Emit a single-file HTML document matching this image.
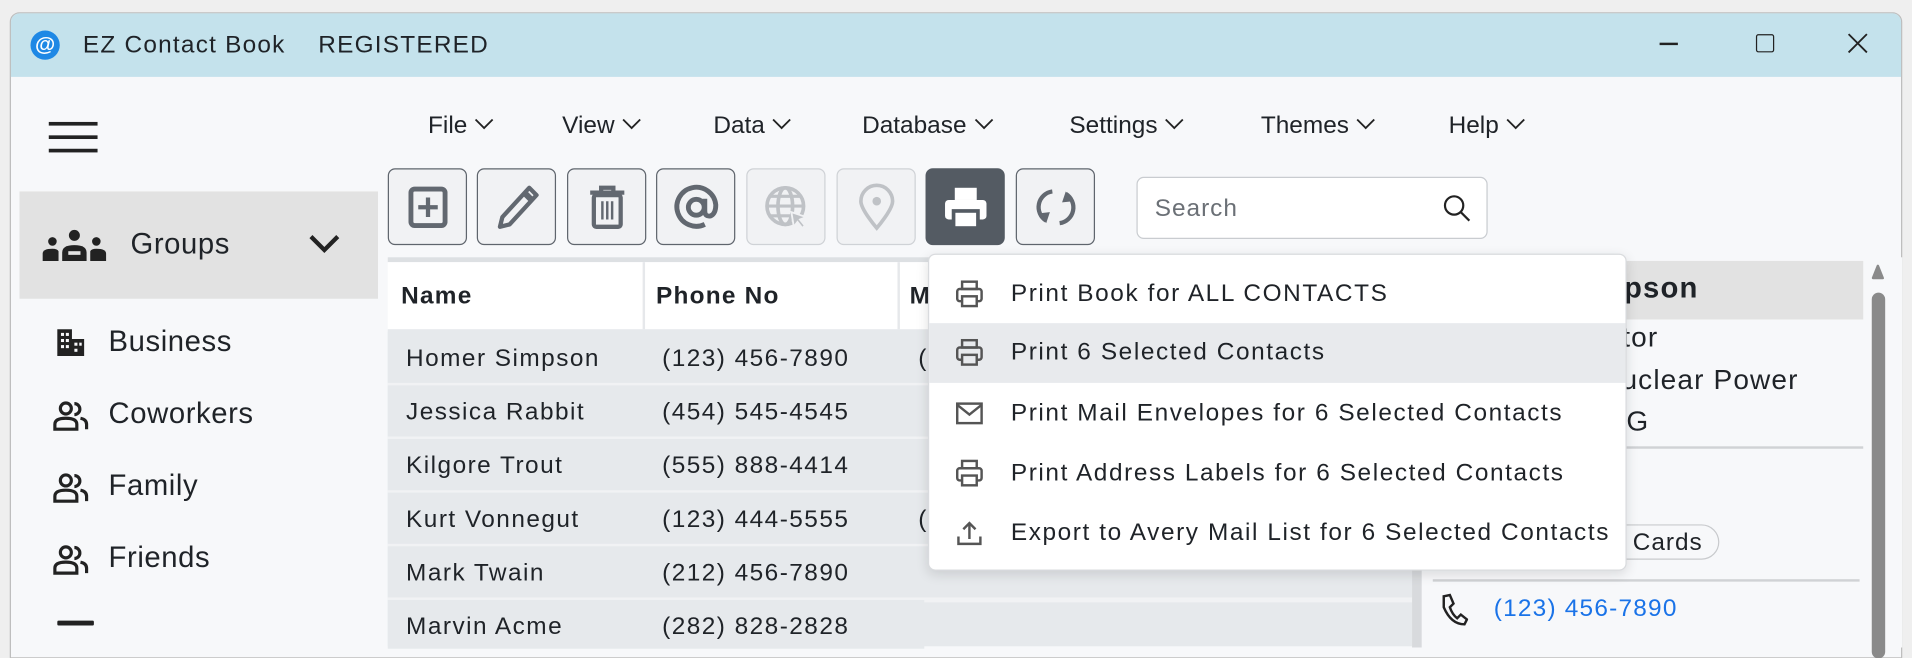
<!DOCTYPE html>
<html><head><meta charset="utf-8"><style>
*{box-sizing:border-box;margin:0;padding:0}
html,body{width:1912px;height:631px;overflow:hidden;background:#efefef;font-family:"Liberation Sans",sans-serif;color:#1f2328}
#s{position:absolute;left:0;top:0;width:1568px;height:518px;transform:scale(1.21939);transform-origin:0 0}
.a{position:absolute}
.win{left:8px;top:10px;width:1552px;height:530px;border:1px solid #bdbdbd;border-radius:8px 8px 0 0;background:#f7f8fa;overflow:hidden}
.tb{left:0;top:0;width:100%;height:52px;background:#c4e2ec}
.t{font-size:20px;white-space:nowrap;letter-spacing:0.05em}
.menu{font-size:20px;top:92px}
.menu svg{margin-left:6px;vertical-align:2px}
.btn{top:138px;width:65px;height:63px;border:1.5px solid #5f656d;border-radius:6px;background:#f1f2f4;display:flex;align-items:center;justify-content:center}
.btn.dis{border-color:#cfd2d6}
.btn.on{background:#545b63;border-color:#545b63}
.grp{font-size:24px;letter-spacing:0.02em}
.row{left:318px;width:440px;height:42px;background:#e6e9ec;font-size:20px;letter-spacing:0.06em}
.row span{position:absolute;top:11px}
.mi{left:0;width:573px;height:49px;font-size:20px;letter-spacing:0.065em}
.mi span{position:absolute;left:67px;top:13px;white-space:nowrap}
.mi svg{position:absolute;left:21px;top:12px}
.rp{font-size:23px;letter-spacing:0.04em;white-space:nowrap}
</style></head><body><div id="s">
<div class="a win"></div>
<div class="a tb" style="left:9px;top:11px;width:1550px;border-radius:7px 7px 0 0"></div>
<div class="a" style="left:25px;top:25px;width:24px;height:24px;border-radius:50%;background:#1e88e5;color:#fff;font-size:17px;font-weight:bold;text-align:center;line-height:23px">@</div>
<div class="a t" style="left:68px;top:26px">EZ Contact Book</div>
<div class="a t" style="left:261px;top:26px">REGISTERED</div>
<div class="a" style="left:1361px;top:35px;width:15px;height:1.5px;background:#222"></div>
<div class="a" style="left:1440px;top:28px;width:15px;height:15px;border:1.5px solid #222;border-radius:2px"></div>
<svg class="a" style="left:1515px;top:27px" width="17" height="17"><path d="M1 1L16 16M16 1L1 16" stroke="#222" stroke-width="1.5"/></svg>
<div class="a" style="left:40px;top:100px;width:40px;height:3px;background:#222;box-shadow:0 11px 0 #222,0 22px 0 #222"></div>
<div class="a menu" style="left:351px">File<svg width="16" height="10"><path d="M1 1L8 8L15 1" stroke="#222" fill="none" stroke-width="1.5"/></svg></div>
<div class="a menu" style="left:461px">View<svg width="16" height="10"><path d="M1 1L8 8L15 1" stroke="#222" fill="none" stroke-width="1.5"/></svg></div>
<div class="a menu" style="left:585px">Data<svg width="16" height="10"><path d="M1 1L8 8L15 1" stroke="#222" fill="none" stroke-width="1.5"/></svg></div>
<div class="a menu" style="left:707px">Database<svg width="16" height="10"><path d="M1 1L8 8L15 1" stroke="#222" fill="none" stroke-width="1.5"/></svg></div>
<div class="a menu" style="left:877px">Settings<svg width="16" height="10"><path d="M1 1L8 8L15 1" stroke="#222" fill="none" stroke-width="1.5"/></svg></div>
<div class="a menu" style="left:1034px">Themes<svg width="16" height="10"><path d="M1 1L8 8L15 1" stroke="#222" fill="none" stroke-width="1.5"/></svg></div>
<div class="a menu" style="left:1188px">Help<svg width="16" height="10"><path d="M1 1L8 8L15 1" stroke="#222" fill="none" stroke-width="1.5"/></svg></div>
<div class="a btn" style="left:318px"><svg width="40" height="40"><rect x="6" y="5" width="28" height="30" rx="3" fill="none" stroke="#626870" stroke-width="4"/><path d="M20 12V28M12 20H28" stroke="#626870" stroke-width="3.5"/></svg></div>
<div class="a btn" style="left:391px"><svg width="40" height="40"><path d="M30 4L36 10L14 34L6 36L8 28Z" fill="none" stroke="#626870" stroke-width="3.5" stroke-linejoin="round"/><path d="M26 8L32 14" stroke="#626870" stroke-width="5"/></svg></div>
<div class="a btn" style="left:465px"><svg width="40" height="40"><path d="M6 8H34M15 8V4H25V8" stroke="#626870" stroke-width="3.5" fill="none"/><rect x="9" y="10" width="22" height="26" rx="2" fill="none" stroke="#626870" stroke-width="3.5"/><path d="M16 15V30M20 15V30M24 15V30" stroke="#626870" stroke-width="2"/></svg></div>
<div class="a btn" style="left:538px"><svg width="42" height="42"><circle cx="21" cy="21" r="6.5" fill="none" stroke="#626870" stroke-width="4"/><path d="M28 14V24Q28 29 33 28Q37 26 37 19A16 16 0 1 0 28 35" fill="none" stroke="#626870" stroke-width="4"/></svg></div>
<div class="a btn dis" style="left:612px"><svg width="40" height="40"><circle cx="19" cy="19" r="15" fill="none" stroke="#bfc2c6" stroke-width="3"/><ellipse cx="19" cy="19" rx="6" ry="15" fill="none" stroke="#bfc2c6" stroke-width="3"/><path d="M4 19H34M7 11H31M7 27H27" stroke="#bfc2c6" stroke-width="2.5"/><path d="M24 24L36 28L31 30L35 35L33 37L29 32L26 36Z" fill="#bfc2c6" stroke="#f1f2f4" stroke-width="1.5"/></svg></div>
<div class="a btn dis" style="left:686px"><svg width="40" height="40"><path d="M20 37C20 37 7 22 7 15A13 13 0 0 1 33 15C33 22 20 37 20 37Z" fill="none" stroke="#bfc2c6" stroke-width="3"/><circle cx="20" cy="15" r="3.5" fill="#bfc2c6"/></svg></div>
<div class="a btn on" style="left:759px"><svg width="40" height="40"><rect x="11" y="4" width="18" height="10" fill="#fff"/><rect x="3" y="14" width="34" height="16" rx="3" fill="#fff"/><rect x="10" y="23" width="20" height="14" fill="#fff" stroke="#545b63" stroke-width="3"/><rect x="13" y="26" width="14" height="8" fill="#fff"/></svg></div>
<div class="a btn" style="left:833px"><svg width="40" height="40"><path d="M17 7A13 13 0 0 0 12 31" fill="none" stroke="#626870" stroke-width="3.5"/><path d="M23 33A13 13 0 0 0 28 9" fill="none" stroke="#626870" stroke-width="3.5"/><path d="M6 25L12 33L15 24Z" fill="#626870"/><path d="M34 15L28 7L25 16Z" fill="#626870"/></svg></div>
<div class="a" style="left:932px;top:145px;width:288px;height:51px;border:1px solid #c9ccd0;border-radius:6px;background:#fff"></div>
<div class="a" style="left:947px;top:160px;font-size:20px;color:#6b7076;letter-spacing:0.04em">Search</div>
<svg class="a" style="left:1183px;top:159px" width="24" height="24"><circle cx="9.5" cy="9.5" r="7.5" fill="none" stroke="#222" stroke-width="1.8"/><path d="M15 15L22 22" stroke="#222" stroke-width="1.8"/></svg>
<div class="a" style="left:16px;top:157px;width:294px;height:88px;background:#e2e2e2"></div>
<svg class="a" style="left:33px;top:186px" width="56" height="30"><circle cx="28" cy="7" r="4.5" fill="#222"/><circle cx="10" cy="12" r="3.5" fill="#222"/><circle cx="46" cy="12" r="3.5" fill="#222"/><path d="M18 28V21Q18 15 28 15Q38 15 38 21V28Z" fill="#222"/><path d="M2 28V22Q2 18 10 18Q14 18 15 20V28Z" fill="#222"/><path d="M54 28V22Q54 18 46 18Q42 18 41 20V28Z" fill="#222"/><rect x="23" y="20" width="10" height="3" fill="#e2e2e2"/></svg>
<div class="a grp" style="left:107px;top:187px">Groups</div>
<svg class="a" style="left:253px;top:191px" width="26" height="18"><path d="M2 3L13 14L24 3" stroke="#222" stroke-width="3.5" fill="none"/></svg>
<svg class="a" style="left:45px;top:268px" width="26" height="26"><path d="M2 2H14V10H24V24H2Z" fill="#222"/><g fill="#f7f8fa"><rect x="5" y="5" width="2.5" height="2.5"/><rect x="9" y="5" width="2.5" height="2.5"/><rect x="5" y="10" width="2.5" height="2.5"/><rect x="9" y="10" width="2.5" height="2.5"/><rect x="5" y="15" width="2.5" height="2.5"/><rect x="9" y="15" width="2.5" height="2.5"/><rect x="16" y="13" width="2.5" height="2.5"/><rect x="16" y="18" width="2.5" height="2.5"/><rect x="20" y="13" width="2" height="2.5"/></g></svg>
<div class="a grp" style="left:89px;top:267px">Business</div>
<svg class="a" style="left:43px;top:328px" width="30" height="26"><circle cx="11" cy="7" r="4.5" fill="none" stroke="#222" stroke-width="2.6"/><path d="M2 24V20Q2 15 11 15Q20 15 20 20V24Z" fill="none" stroke="#222" stroke-width="2.6"/><path d="M18 3A4 4 0 0 1 18 12M23 15Q28 16 28 20V24" fill="none" stroke="#222" stroke-width="2.6"/></svg>
<div class="a grp" style="left:89px;top:326px">Coworkers</div>
<svg class="a" style="left:43px;top:387px" width="30" height="26"><circle cx="11" cy="7" r="4.5" fill="none" stroke="#222" stroke-width="2.6"/><path d="M2 24V20Q2 15 11 15Q20 15 20 20V24Z" fill="none" stroke="#222" stroke-width="2.6"/><path d="M18 3A4 4 0 0 1 18 12M23 15Q28 16 28 20V24" fill="none" stroke="#222" stroke-width="2.6"/></svg>
<div class="a grp" style="left:89px;top:385px">Family</div>
<svg class="a" style="left:43px;top:446px" width="30" height="26"><circle cx="11" cy="7" r="4.5" fill="none" stroke="#222" stroke-width="2.6"/><path d="M2 24V20Q2 15 11 15Q20 15 20 20V24Z" fill="none" stroke="#222" stroke-width="2.6"/><path d="M18 3A4 4 0 0 1 18 12M23 15Q28 16 28 20V24" fill="none" stroke="#222" stroke-width="2.6"/></svg>
<div class="a grp" style="left:89px;top:444px">Friends</div>
<div class="a" style="left:47px;top:509px;width:30px;height:4px;background:#222;border-radius:1px"></div>
<div class="a" style="left:318px;top:211px;width:840px;height:4px;background:#dde0e3"></div>
<div class="a" style="left:318px;top:215px;width:840px;height:55px;background:#fff"></div>
<div class="a" style="left:527px;top:215px;width:2px;height:55px;background:#e6e8eb"></div>
<div class="a" style="left:736px;top:215px;width:2px;height:55px;background:#e6e8eb"></div>
<div class="a" style="left:329px;top:232px;font-size:20px;font-weight:bold;letter-spacing:0.05em">Name</div>
<div class="a" style="left:538px;top:232px;font-size:20px;font-weight:bold;letter-spacing:0.05em">Phone No</div>
<div class="a" style="left:746px;top:232px;font-size:20px;font-weight:bold">M</div>
<div class="a" style="left:318px;top:270px;width:840px;height:260px;background:#e6e9ec"></div>
<div class="a row" style="top:272px"><span style="left:15px">Homer Simpson</span><span style="left:225px">(123) 456-7890</span><span style="left:435px">(</span></div>
<div class="a row" style="top:316px"><span style="left:15px">Jessica Rabbit</span><span style="left:225px">(454) 545-4545</span></div>
<div class="a row" style="top:360px"><span style="left:15px">Kilgore Trout</span><span style="left:225px">(555) 888-4414</span></div>
<div class="a row" style="top:404px"><span style="left:15px">Kurt Vonnegut</span><span style="left:225px">(123) 444-5555</span><span style="left:435px">(</span></div>
<div class="a row" style="top:448px"><span style="left:15px">Mark Twain</span><span style="left:225px">(212) 456-7890</span></div>
<div class="a row" style="top:492px;height:40px"><span style="left:15px">Marvin Acme</span><span style="left:225px">(282) 828-2828</span></div>
<div class="a" style="left:318px;top:314px;width:840px;height:2px;background:#f1f2f4;box-shadow:0 44px 0 #f1f2f4,0 88px 0 #f1f2f4,0 132px 0 #f1f2f4,0 176px 0 #f1f2f4"></div>
<div class="a" style="left:758px;top:492px;width:400px;height:2px;background:#f1f2f4"></div>
<div class="a" style="left:1158px;top:211px;width:8px;height:320px;background:#d8dadd"></div>
<div class="a" style="left:1166px;top:211px;width:394px;height:320px;background:#f7f8fa"></div>
<div class="a" style="left:1166px;top:214px;width:362px;height:48px;background:#e2e2e2"></div>
<div class="a rp" style="right:175px;top:223px;font-size:24px;font-weight:bold">Simpson</div>
<div class="a rp" style="right:208px;top:263px">Inspector</div>
<div class="a rp" style="right:93px;top:298px">Nuclear Power</div>
<div class="a rp" style="left:1320px;top:332px">7G</div>
<div class="a" style="left:1175px;top:366px;width:353px;height:2px;background:#d0d2d5"></div>
<div class="a" style="left:1300px;top:430px;width:110px;height:29px;border:1.5px solid #c8cacd;border-radius:15px;font-size:20px;padding:3px 0 0 38px;letter-spacing:0.04em">Cards</div>
<div class="a" style="left:1175px;top:475px;width:350px;height:2px;background:#d0d2d5"></div>
<svg class="a" style="left:1180px;top:486px" width="24" height="28"><path d="M4 3L9 2L12 9L9 12Q11 18 15 21L18 18L23 22L21 26Q10 26 4 12Z" fill="none" stroke="#222" stroke-width="2"/></svg>
<div class="a" style="left:1225px;top:488px;font-size:20px;color:#1a73e8;letter-spacing:0.05em">(123) 456-7890</div>
<svg class="a" style="left:1532px;top:214px" width="16" height="16"><path d="M4 14L8 4L12 14Z" fill="#8a8a8a" stroke="#8a8a8a" stroke-width="2" stroke-linejoin="round"/></svg>
<div class="a" style="left:1535px;top:240px;width:11px;height:300px;border-radius:6px;background:#8a8a8a"></div>
<div class="a" style="left:761px;top:208px;width:573px;height:260px;background:#fff;border:1px solid #d9dbde;border-radius:6px;box-shadow:0 3px 10px rgba(0,0,0,.12);overflow:hidden">
<div class="a mi" style="top:8px"><svg width="24" height="24"><rect x="6" y="2" width="12" height="6" fill="none" stroke="#555" stroke-width="2"/><rect x="2" y="8" width="20" height="10" rx="2" fill="none" stroke="#555" stroke-width="2"/><rect x="6" y="14" width="12" height="8" fill="#fff" stroke="#555" stroke-width="2"/></svg><span>Print Book for ALL CONTACTS</span></div>
<div class="a mi" style="top:56px;background:#e8eaed"><svg width="24" height="24"><rect x="6" y="2" width="12" height="6" fill="none" stroke="#555" stroke-width="2"/><rect x="2" y="8" width="20" height="10" rx="2" fill="none" stroke="#555" stroke-width="2"/><rect x="6" y="14" width="12" height="8" fill="#e8eaed" stroke="#555" stroke-width="2"/></svg><span>Print 6 Selected Contacts</span></div>
<div class="a mi" style="top:106px"><svg width="24" height="24"><rect x="2" y="4" width="20" height="16" fill="none" stroke="#555" stroke-width="2"/><path d="M2 5L12 13L22 5" fill="none" stroke="#555" stroke-width="2"/></svg><span>Print Mail Envelopes for 6 Selected Contacts</span></div>
<div class="a mi" style="top:155px"><svg width="24" height="24"><rect x="6" y="2" width="12" height="6" fill="none" stroke="#555" stroke-width="2"/><rect x="2" y="8" width="20" height="10" rx="2" fill="none" stroke="#555" stroke-width="2"/><rect x="6" y="14" width="12" height="8" fill="#fff" stroke="#555" stroke-width="2"/></svg><span>Print Address Labels for 6 Selected Contacts</span></div>
<div class="a mi" style="top:204px"><svg width="24" height="24"><path d="M12 17V4M7 9L12 4L17 9M3 15V21H21V15" fill="none" stroke="#555" stroke-width="2"/></svg><span>Export to Avery Mail List for 6 Selected Contacts</span></div>
</div>
</div></body></html>
